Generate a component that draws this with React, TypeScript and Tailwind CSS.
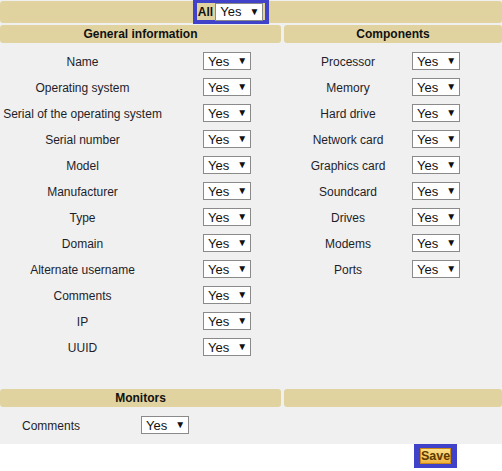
import React from 'react';

const general = [
  'Name',
  'Operating system',
  'Serial of the operating system',
  'Serial number',
  'Model',
  'Manufacturer',
  'Type',
  'Domain',
  'Alternate username',
  'Comments',
  'IP',
  'UUID',
];

const components = [
  'Processor',
  'Memory',
  'Hard drive',
  'Network card',
  'Graphics card',
  'Soundcard',
  'Drives',
  'Modems',
  'Ports',
];

const YesSelect: React.FC = () => (
  <div className="flex h-[18px] w-[48px] shrink-0 items-center border border-[#8a8a8a] bg-white pl-[4px] text-[13px] leading-none text-[#111]">
    <span>Yes</span>
    <span className="ml-[8px] text-[10px]">▼</span>
  </div>
);

const Header: React.FC<{ title?: string; className?: string }> = ({ title, className }) => (
  <div
    className={`flex h-[18px] items-center justify-center rounded-[3px] bg-[#e0d3a0] text-[12px] font-bold text-[#111] ${className ?? ''}`}
  >
    {title}
  </div>
);

const App: React.FC = () => {
  return (
    <div className="h-[471px] w-[502px] bg-white font-['Liberation_Sans',Arial,sans-serif] text-[12px] text-[#1e1e2a]">
      <div className="h-[444px] bg-[#f0f0f0]">
        <div className="pt-[1px]">
          <div className="flex h-[22px] items-center justify-center rounded-[3px] bg-[#e0d3a0]">
            <div className="-mt-[1px] mr-[40px] flex h-[25px] shrink-0 items-center gap-[2px] border-[4px] border-[#4043c9] bg-[#e0d3a0] pl-[1px] pr-[2px]">
              <span className="text-[12px] font-bold text-[#111]">All</span>
              <YesSelect />
            </div>
          </div>
        </div>

        <div className="mt-[2px] flex gap-[3px]">
          <Header title="General information" className="w-[281px]" />
          <Header title="Components" className="flex-1" />
        </div>

        <div className="mt-[5px] flex gap-[3px]">
          <div className="w-[281px]">
            {general.map((g) => (
              <div key={g} className="flex h-[26px] items-center">
                <div className="w-[165px] whitespace-nowrap pt-[1px] text-center">{g}</div>
                <div className="ml-[38px]">
                  <YesSelect />
                </div>
              </div>
            ))}
          </div>
          <div className="flex-1">
            {components.map((c) => (
              <div key={c} className="flex h-[26px] items-center">
                <div className="w-[128px] whitespace-nowrap pt-[1px] text-center">{c}</div>
                <YesSelect />
              </div>
            ))}
          </div>
        </div>

        <div className="mt-[29px] flex gap-[3px]">
          <Header title="Monitors" className="w-[281px]" />
          <Header className="flex-1" />
        </div>

        <div className="mt-[5px] flex h-[26px] items-center">
          <div className="ml-[22px] w-[119px] pt-[1px]">Comments</div>
          <YesSelect />
        </div>
      </div>

      <div className="flex justify-end pr-[45px]">
        <div className="flex h-[24px] w-[43px] items-center justify-center bg-[#4043c9]">
          <button className="flex h-[16px] w-[31px] items-center justify-center border border-[#c98a1a] bg-gradient-to-b from-[#fde08a] to-[#f2b33d] text-[12.5px] font-bold text-[#5a3a00]">
            Save
          </button>
        </div>
      </div>
    </div>
  );
};

export default App;
